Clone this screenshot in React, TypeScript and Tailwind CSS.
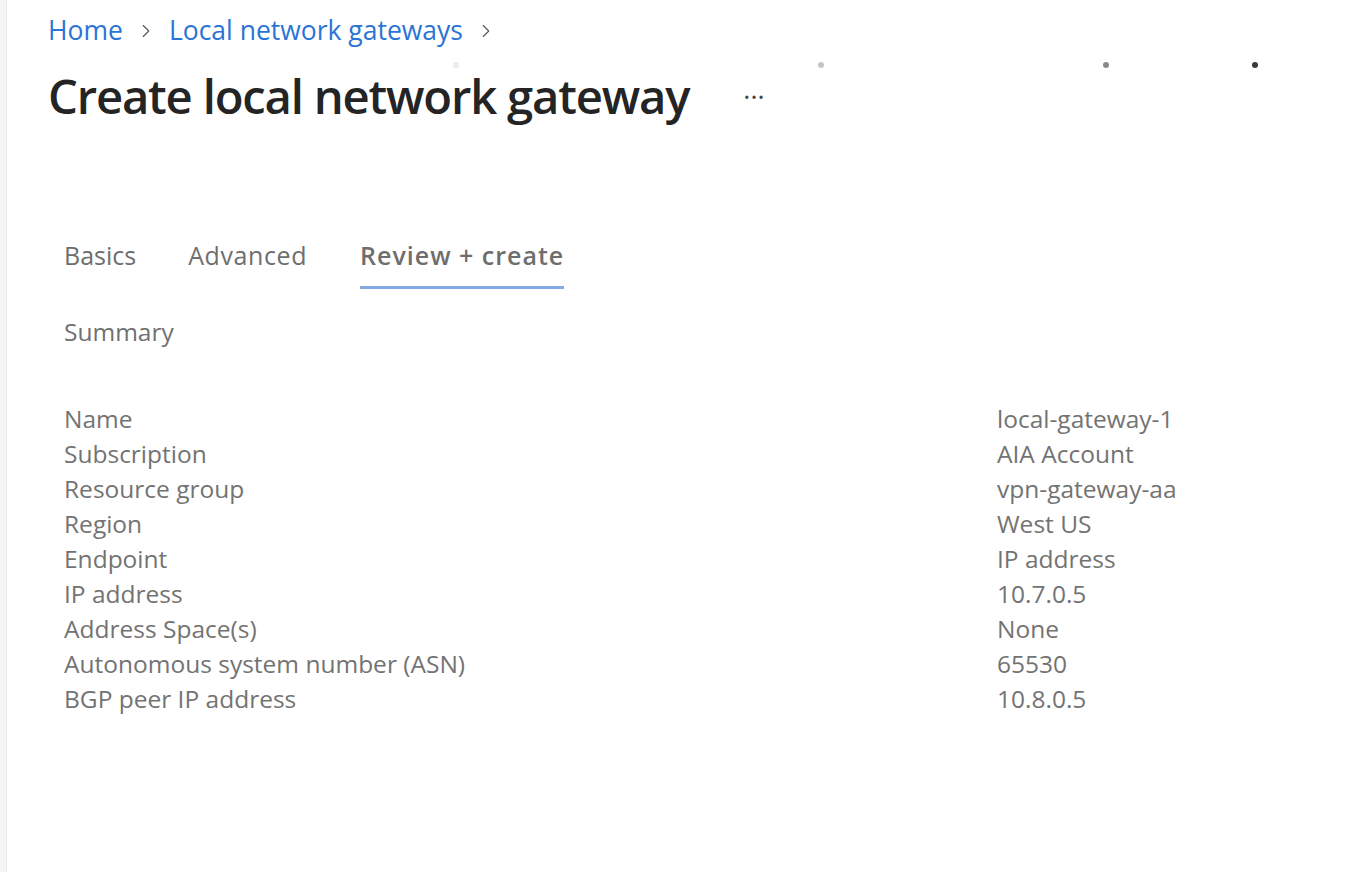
import { ChevronRight } from 'lucide-react';

const rows: [string, string][] = [
  ['Name', 'local-gateway-1'],
  ['Subscription', 'AIA Account'],
  ['Resource group', 'vpn-gateway-aa'],
  ['Region', 'West US'],
  ['Endpoint', 'IP address'],
  ['IP address', '10.7.0.5'],
  ['Address Space(s)', 'None'],
  ['Autonomous system number (ASN)', '65530'],
  ['BGP peer IP address', '10.8.0.5'],
];

export default function App() {
  return (
    <div className="relative flex min-h-[872px] bg-white font-['Open_Sans',sans-serif]">
      <div className="w-[7px] shrink-0 border-r border-[#e6e6e6] bg-[#f5f5f5]" />

      {/* loading dots */}
      <span className="absolute left-[453px] top-[62px] h-[6px] w-[6px] rounded-full bg-[#ececec]" />
      <span className="absolute left-[818px] top-[62px] h-[6px] w-[6px] rounded-full bg-[#c4c4c4]" />
      <span className="absolute left-[1103px] top-[62px] h-[6px] w-[6px] rounded-full bg-[#8a8a8a]" />
      <span className="absolute left-[1252px] top-[62px] h-[6px] w-[6px] rounded-full bg-[#3a3a3a]" />

      <main className="flex-1 pl-[41px] pt-[11px]">
        <nav className="flex items-center text-[26.5px] text-[#2a74d5]">
          <span>Home</span>
          <ChevronRight className="mx-[12px] h-[22px] w-[22px] text-[#555]" strokeWidth={1.2} />
          <span>Local network gateways</span>
          <ChevronRight className="mx-[12px] h-[22px] w-[22px] text-[#555]" strokeWidth={1.2} />
        </nav>

        <div className="mt-[10px] flex items-center">
          <h1 className="text-[47.2px] font-semibold tracking-tight text-[#242424]">Create local network gateway</h1>
          <span className="ml-[54px] text-[27px] leading-none text-[#444]">&middot;&middot;&middot;</span>
        </div>

        <div className="mt-[105px] flex gap-[53px] pl-[16px] text-[25px] text-[#6e6e6e]">
          <div className="pb-[14px]">Basics</div>
          <div className="-ml-[1px] pb-[14px] tracking-[0.6px]">Advanced</div>
          <div className="border-b-[3px] border-[#84a9e3] pb-[12px] font-semibold tracking-[1px]">Review + create</div>
        </div>

        <div className="mt-[25px] pl-[16px] text-[24.5px] text-[#707070]">Summary</div>

        <div className="mt-[51px] pl-[16px] text-[24.5px] text-[#737373]">
          {rows.map(([label, value]) => (
            <div key={label} className="flex h-[35px] items-center">
              <div className="w-[933px]">{label}</div>
              <div>{value}</div>
            </div>
          ))}
        </div>
      </main>
    </div>
  );
}
